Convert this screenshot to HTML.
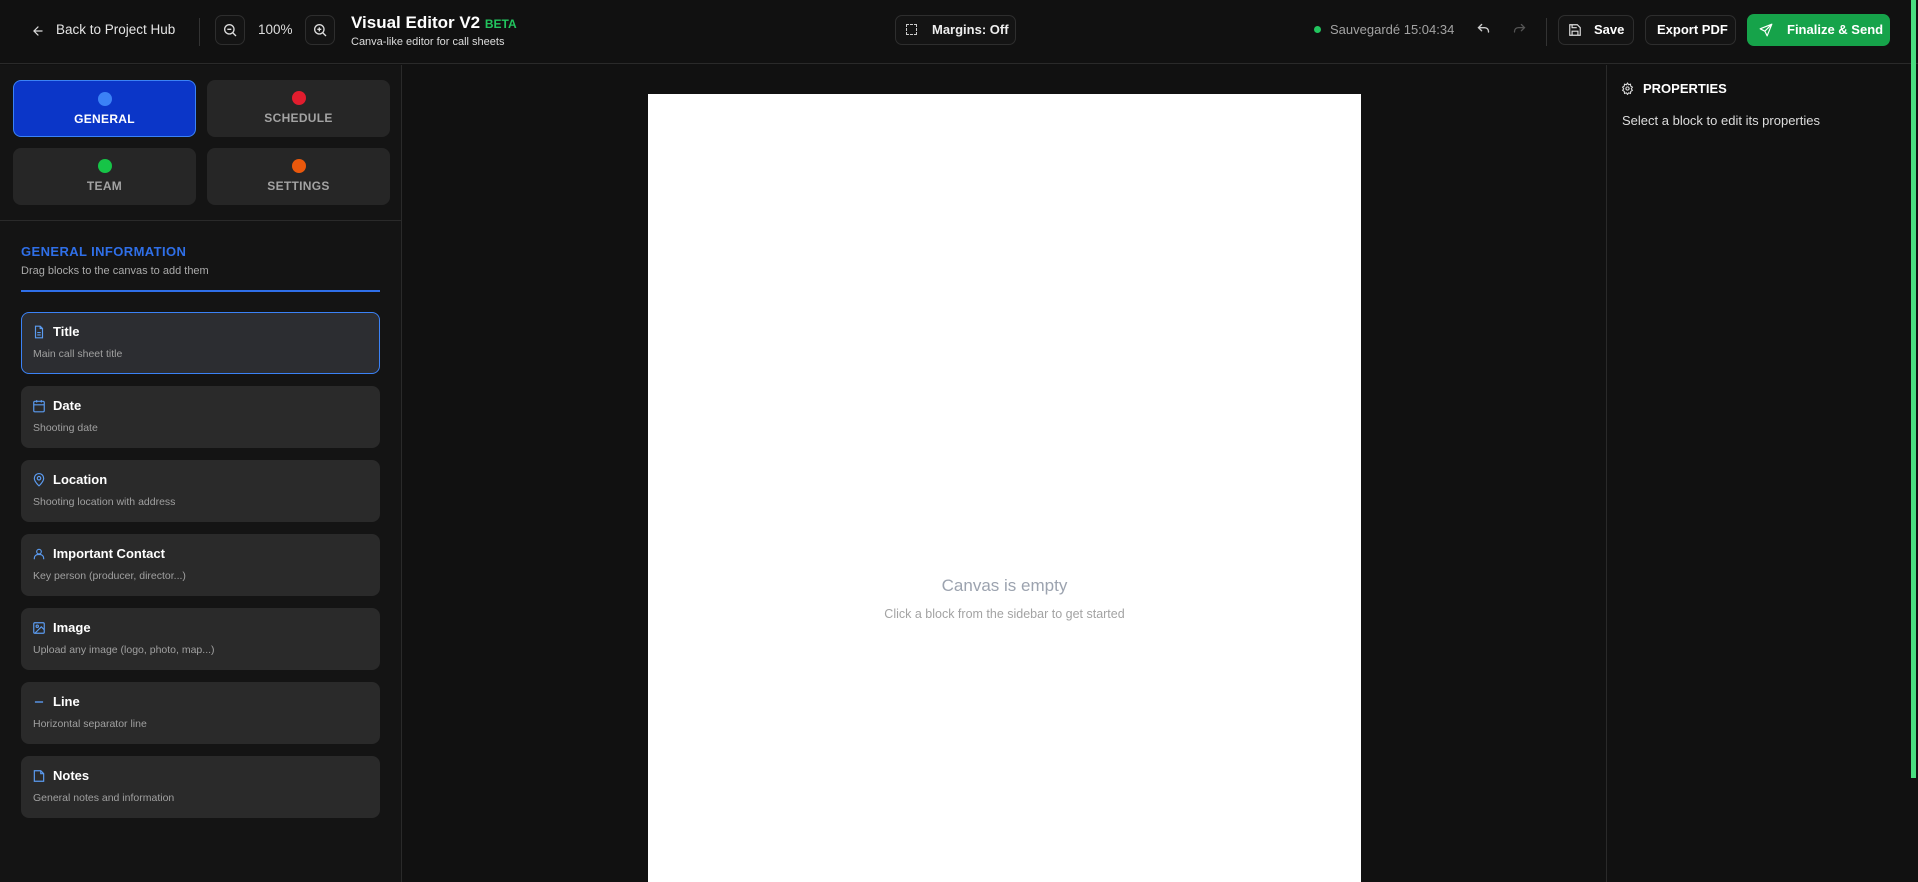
<!DOCTYPE html>
<html><head><meta charset="utf-8"><style>
*{box-sizing:border-box;margin:0;padding:0}
body{width:1918px;height:882px;overflow:hidden;background:#111111;font-family:"Liberation Sans",sans-serif;color:#fff;position:relative}
.a{position:absolute}
.hdr{left:0;top:0;width:1918px;height:64px;background:#111;border-bottom:1px solid #2a2a2a}
.btn{position:absolute;border:1px solid #2e2e2e;border-radius:7px;background:#141414}
.side{left:0;top:65px;width:402px;height:817px;background:#141414;border-right:1px solid #2a2a2a}
.tab{position:absolute;width:183px;height:57px;border-radius:8px;background:#262626;text-align:center;font-size:12px;font-weight:bold;color:#a3a3a3;letter-spacing:.3px}
.tab .d{width:14px;height:14px;border-radius:50%;margin:11px auto 6px}
.card{position:absolute;left:21px;width:359px;height:62px;border-radius:8px;background:#2a2a2a}
.card .t{position:absolute;left:32px;top:12px;font-size:13px;font-weight:bold;color:#fff}
.card .s{position:absolute;left:12px;top:36px;font-size:10.5px;color:#a0a0a0}
.card svg{position:absolute;left:11px;top:13px}
.right{left:1606px;top:65px;width:312px;height:817px;background:#111;border-left:1px solid #2a2a2a}
</style></head><body>
<div class="a hdr"></div>
<svg class="a" style="left:31px;top:24px" width="14" height="14" viewBox="0 0 24 24" fill="none" stroke="#ddd" stroke-width="2" stroke-linecap="round"><path d="M19 12H5M12 19l-7-7 7-7"/></svg>
<div class="a" style="left:56px;top:22px;font-size:13.5px;color:#e5e5e5">Back to Project Hub</div>
<div class="a" style="left:199px;top:18px;width:1px;height:28px;background:#333"></div>
<div class="btn" style="left:215px;top:15px;width:30px;height:30px"></div>
<svg class="a" style="left:222px;top:22px" width="16" height="16" viewBox="0 0 24 24" fill="none" stroke="#ddd" stroke-width="2"><circle cx="11" cy="11" r="7"/><path d="M21 21l-4.5-4.5M8 11h6"/></svg>
<div class="a" style="left:258px;top:22px;font-size:13.5px;color:#ddd">100%</div>
<div class="btn" style="left:305px;top:15px;width:30px;height:30px"></div>
<svg class="a" style="left:312px;top:22px" width="16" height="16" viewBox="0 0 24 24" fill="none" stroke="#ddd" stroke-width="2"><circle cx="11" cy="11" r="7"/><path d="M21 21l-4.5-4.5M8 11h6M11 8v6"/></svg>
<div class="a" style="left:351px;top:13px;font-size:17px;font-weight:bold;color:#fff">Visual Editor V2 <span style="font-size:12px;color:#22c55e">BETA</span></div>
<div class="a" style="left:351px;top:36px;font-size:11px;color:#ddd">Canva-like editor for call sheets</div>
<div class="btn" style="left:895px;top:15px;width:121px;height:30px"></div>
<div class="a" style="left:906px;top:24px;width:11px;height:11px;border:1.5px dashed #ccc"></div>
<div class="a" style="left:932px;top:22px;font-size:13px;font-weight:bold;color:#eee">Margins: Off</div>
<div class="a" style="left:1314px;top:26px;width:7px;height:7px;border-radius:50%;background:#22c55e"></div>
<div class="a" style="left:1330px;top:22px;font-size:13px;color:#a3a3a3">Sauvegardé 15:04:34</div>
<svg class="a" style="left:1476px;top:22px" width="15" height="15" viewBox="0 0 24 24" fill="none" stroke="#ccc" stroke-width="2.2" stroke-linecap="round"><path d="M9 14L4 9l5-5"/><path d="M4 9h10a6 6 0 0 1 6 6v1"/></svg>
<svg class="a" style="left:1512px;top:22px" width="15" height="15" viewBox="0 0 24 24" fill="none" stroke="#555" stroke-width="2" stroke-linecap="round"><path d="M15 14l5-5-5-5"/><path d="M20 9H10a6 6 0 0 0-6 6v1"/></svg>
<div class="a" style="left:1546px;top:18px;width:1px;height:28px;background:#333"></div>
<div class="btn" style="left:1558px;top:15px;width:76px;height:30px"></div>
<svg class="a" style="left:1568px;top:23px" width="14" height="14" viewBox="0 0 24 24" fill="none" stroke="#ddd" stroke-width="2"><path d="M5 3h11l5 5v13H3V3z"/><path d="M7 3v5h8M7 21v-7h10v7"/></svg>
<div class="a" style="left:1594px;top:22px;font-size:13px;font-weight:bold">Save</div>
<div class="btn" style="left:1645px;top:15px;width:91px;height:30px"></div>
<div class="a" style="left:1657px;top:22px;font-size:13px;font-weight:bold">Export PDF</div>
<div class="a" style="left:1747px;top:14px;width:143px;height:32px;border-radius:7px;background:#16a34a"></div>
<svg class="a" style="left:1759px;top:23px" width="14" height="14" viewBox="0 0 24 24" fill="none" stroke="#fff" stroke-width="2" stroke-linejoin="round"><path d="M22 2L2 10l8 4 4 8 8-20zM10 14l12-12"/></svg>
<div class="a" style="left:1787px;top:22px;font-size:13px;font-weight:bold">Finalize &amp; Send</div>

<div class="a side"></div>
<div class="tab" style="left:13px;top:80px;background:#0b36c8;border:1px solid #3b82f6;color:#fff"><div class="d" style="background:#3b82f6"></div>GENERAL</div>
<div class="tab" style="left:207px;top:80px"><div class="d" style="background:#e11d2e"></div>SCHEDULE</div>
<div class="tab" style="left:13px;top:148px"><div class="d" style="background:#16c447"></div>TEAM</div>
<div class="tab" style="left:207px;top:148px"><div class="d" style="background:#ea580c"></div>SETTINGS</div>
<div class="a" style="left:0;top:220px;width:402px;height:1px;background:#2a2a2a"></div>
<div class="a" style="left:21px;top:244px;font-size:13px;font-weight:bold;color:#2f6fe8;letter-spacing:.4px">GENERAL INFORMATION</div>
<div class="a" style="left:21px;top:265px;font-size:11px;color:#aaa">Drag blocks to the canvas to add them</div>
<div class="a" style="left:21px;top:290px;width:359px;height:2px;background:#2f6fe8"></div>

<div class="card" style="top:312px;border:1px solid #3b82f6;background:#2c2d31"><svg width="14" height="14" viewBox="0 0 24 24" fill="none" stroke="#5b9bf0" stroke-width="2" style="left:10px;top:12px"><path d="M14 2H6v20h12V6z"/><path d="M14 2v4h4M9 13h6M9 17h6"/></svg><div class="t" style="left:31px;top:11px">Title</div><div class="s" style="left:11px;top:35px">Main call sheet title</div></div>
<div class="card" style="top:386px"><svg width="14" height="14" viewBox="0 0 24 24" fill="none" stroke="#5b9bf0" stroke-width="2"><rect x="3" y="4" width="18" height="18" rx="2"/><path d="M3 10h18M8 2v4M16 2v4"/></svg><div class="t">Date</div><div class="s">Shooting date</div></div>
<div class="card" style="top:460px"><svg width="14" height="14" viewBox="0 0 24 24" fill="none" stroke="#5b9bf0" stroke-width="2"><path d="M12 22s8-7 8-13a8 8 0 0 0-16 0c0 6 8 13 8 13z"/><circle cx="12" cy="9" r="3"/></svg><div class="t">Location</div><div class="s">Shooting location with address</div></div>
<div class="card" style="top:534px"><svg width="14" height="14" viewBox="0 0 24 24" fill="none" stroke="#5b9bf0" stroke-width="2"><circle cx="12" cy="8" r="4"/><path d="M4 21v-2a6 6 0 0 1 6-6h4a6 6 0 0 1 6 6v2"/></svg><div class="t">Important Contact</div><div class="s">Key person (producer, director...)</div></div>
<div class="card" style="top:608px"><svg width="14" height="14" viewBox="0 0 24 24" fill="none" stroke="#5b9bf0" stroke-width="2"><rect x="3" y="3" width="18" height="18" rx="2"/><circle cx="9" cy="9" r="2"/><path d="M21 15l-5-5L5 21"/></svg><div class="t">Image</div><div class="s">Upload any image (logo, photo, map...)</div></div>
<div class="card" style="top:682px"><svg width="14" height="14" viewBox="0 0 24 24" fill="none" stroke="#5b9bf0" stroke-width="2.4"><path d="M5 12h14"/></svg><div class="t">Line</div><div class="s">Horizontal separator line</div></div>
<div class="card" style="top:756px"><svg width="14" height="14" viewBox="0 0 24 24" fill="none" stroke="#5b9bf0" stroke-width="2"><path d="M4 3h11l5 5v13H4z"/><path d="M15 3v5h5"/></svg><div class="t">Notes</div><div class="s">General notes and information</div></div>

<div class="a" style="left:648px;top:94px;width:713px;height:788px;background:#fff"></div>
<div class="a" style="left:648px;top:576px;width:713px;text-align:center;font-size:17px;color:#9ca3af">Canvas is empty</div>
<div class="a" style="left:648px;top:607px;width:713px;text-align:center;font-size:12.5px;color:#a3a3a3">Click a block from the sidebar to get started</div>

<div class="a right"></div>
<svg class="a" style="left:1621px;top:82px" width="13" height="13" viewBox="0 0 24 24" fill="none" stroke="#ddd" stroke-width="2"><circle cx="12" cy="12" r="3"/><path d="M12 2l2 3 3.5-1 .5 3.5 3 2-2 3 2 3-3 2-.5 3.5-3.5-1-2 3-2-3-3.5 1L6 17.5l-3-2 2-3-2-3 3-2L6.5 4 10 5z"/></svg>
<div class="a" style="left:1643px;top:81px;font-size:13px;font-weight:bold">PROPERTIES</div>
<div class="a" style="left:1622px;top:113px;font-size:13px;color:#ddd">Select a block to edit its properties</div>
<div class="a" style="left:1911px;top:0;width:5px;height:778px;background:#4ade80"></div>
</body></html>
